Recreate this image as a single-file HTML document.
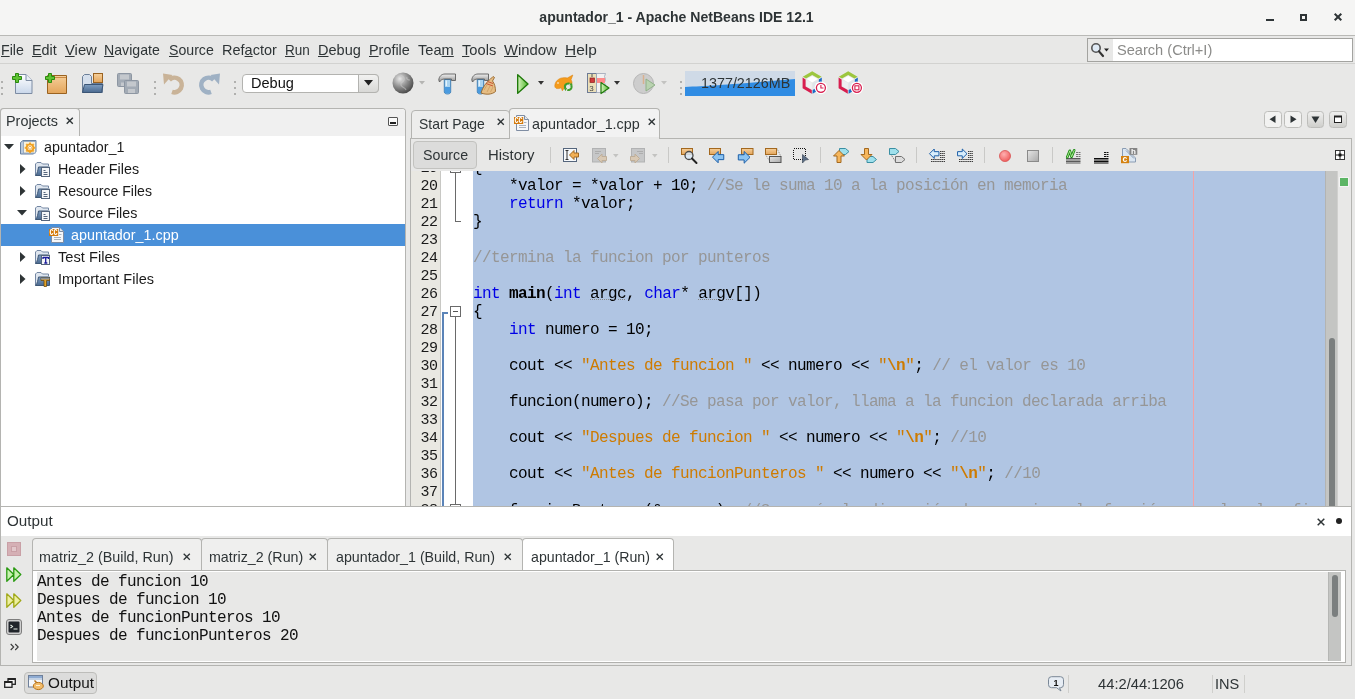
<!DOCTYPE html>
<html><head><meta charset="utf-8"><title>apuntador_1 - Apache NetBeans IDE 12.1</title>
<style>
*{box-sizing:border-box;margin:0;padding:0}
html,body{width:1355px;height:699px;overflow:hidden;background:#e8e8e7;font-family:"Liberation Sans",sans-serif;font-size:14.1px;color:#2e3436}
#w{position:absolute;left:0;top:0;width:1355px;height:699px;overflow:hidden;will-change:transform}
.a{position:absolute}
.t{position:absolute;white-space:pre;line-height:16px;height:16px;transform-origin:0 0}
svg{position:absolute;overflow:visible}
.mono{font-family:"Liberation Mono",monospace}
u{text-decoration:underline;text-decoration-thickness:1px;text-underline-offset:1px}
#code{position:absolute;left:411px;top:171px;width:940px;height:335px;overflow:hidden;background:#fff}
.ln{position:absolute;left:0;width:26.400px;text-align:right;font:15px/18px "Liberation Mono",monospace;letter-spacing:-0.57px;color:#1a1a1a;height:18px}
.cl{position:absolute;left:62px;white-space:pre;font:16px/18px "Liberation Mono",monospace;letter-spacing:-0.6px;color:#000;height:18px}
.k{color:#0000e6}.s{color:#ce7b00}.c{color:#969696}.b{font-weight:bold}
.w{text-decoration:underline dotted #8a8a8a 1px;text-underline-offset:1px}
.out{position:absolute;left:37px;white-space:pre;font:16px/18px "Liberation Mono",monospace;letter-spacing:-0.6px;color:#111;height:18px}
.sep{position:absolute;width:1px;background:#c9c9c7}
.grip{position:absolute;width:2px;height:2px;background:#b0b0ae}
</style></head><body>
<div id="w">
<div class="a" style="left:0;top:0;width:1355px;height:36px;background:#f5f5f4;border-bottom:1px solid #b9b9b6"></div>
<div class="t" style="left:-1.5px;width:1355px;text-align:center;top:9px;font-weight:bold;font-size:14.56px;color:#2e3436;transform:scaleX(.966);transform-origin:50% 0">apuntador_1 - Apache NetBeans IDE 12.1</div>
<div class="a" style="left:1266px;top:19px;width:8px;height:2px;background:#2e3436"></div>
<div class="a" style="left:1300px;top:14px;width:7px;height:7px;border:2px solid #2e3436"></div>
<svg style="left:1334px;top:13px" width="8" height="8" viewBox="0 0 8 8"><path d="M0.7 0.7L7.3 7.3M7.3 0.7L0.7 7.3" stroke="#2e3436" stroke-width="2" fill="none"/></svg>
<div class="a" style="left:0;top:36px;width:1355px;height:28px;background:#e8e8e7;border-bottom:1px solid #d2d2d0"></div>
<div class="t" style="left:1.3px;top:42px;font-size:14.6px;transform:scaleX(0.9691);"><u>F</u>ile</div>
<div class="t" style="left:32.3px;top:42px;font-size:14.6px;transform:scaleX(0.9857);"><u>E</u>dit</div>
<div class="t" style="left:65.3px;top:42px;font-size:14.6px;transform:scaleX(1.0133);"><u>V</u>iew</div>
<div class="t" style="left:104.3px;top:42px;font-size:14.6px;transform:scaleX(0.9683);"><u>N</u>avigate</div>
<div class="t" style="left:169.3px;top:42px;font-size:14.6px;transform:scaleX(0.9684);"><u>S</u>ource</div>
<div class="t" style="left:222.3px;top:42px;font-size:14.6px;transform:scaleX(0.9931);">Ref<u>a</u>ctor</div>
<div class="t" style="left:285.3px;top:42px;font-size:14.6px;transform:scaleX(0.9259);"><u>R</u>un</div>
<div class="t" style="left:318.3px;top:42px;font-size:14.6px;transform:scaleX(0.9948);"><u>D</u>ebug</div>
<div class="t" style="left:369.3px;top:42px;font-size:14.6px;transform:scaleX(0.9859);"><u>P</u>rofile</div>
<div class="t" style="left:418.3px;top:42px;font-size:14.6px;transform:scaleX(1.0027);">Tea<u>m</u></div>
<div class="t" style="left:461.8px;top:42px;font-size:14.6px;transform:scaleX(1.0063);"><u>T</u>ools</div>
<div class="t" style="left:504.3px;top:42px;font-size:14.6px;transform:scaleX(1.0168);"><u>W</u>indow</div>
<div class="t" style="left:565.3px;top:42px;font-size:14.6px;transform:scaleX(1.0590);"><u>H</u>elp</div>
<div class="a" style="left:1087px;top:38px;width:266px;height:24px;border:1px solid #a3a3a0;background:#fff"></div>
<div class="a" style="left:1088px;top:39px;width:25px;height:22px;background:#e8e8e7"></div>
<svg style="left:1090px;top:42px" width="22" height="16" viewBox="0 0 22 16"><circle cx="6" cy="6" r="4.2" fill="#dfeaf5" stroke="#555" stroke-width="1.6"/><path d="M9 9.4L13 14" stroke="#333" stroke-width="2.2" stroke-linecap="round"/><path d="M14 6.5h5l-2.5 3z" fill="#222"/></svg>
<div class="t" style="left:1116.7px;top:42px;font-size:14.6px;transform:scaleX(0.9997);color:#8b8b89;">Search (Ctrl+I)</div>
<div class="grip" style="left:1px;top:81px"></div>
<div class="grip" style="left:1px;top:87px"></div>
<div class="grip" style="left:1px;top:93px"></div>
<div class="grip" style="left:154px;top:81px"></div>
<div class="grip" style="left:154px;top:87px"></div>
<div class="grip" style="left:154px;top:93px"></div>
<div class="grip" style="left:234px;top:81px"></div>
<div class="grip" style="left:234px;top:87px"></div>
<div class="grip" style="left:234px;top:93px"></div>
<div class="grip" style="left:680px;top:81px"></div>
<div class="grip" style="left:680px;top:87px"></div>
<div class="grip" style="left:680px;top:93px"></div>
<svg width="0" height="0" style="left:0;top:0"><defs>
<linearGradient id="gPage" x1="0" y1="0" x2="0" y2="1"><stop offset="0" stop-color="#ffffff"/><stop offset="1" stop-color="#c9d7ea"/></linearGradient>
<linearGradient id="gOr" x1="0" y1="0" x2="0" y2="1"><stop offset="0" stop-color="#f6cf9a"/><stop offset="1" stop-color="#e3a55b"/></linearGradient>
<linearGradient id="gFold" x1="0" y1="0" x2="0" y2="1"><stop offset="0" stop-color="#7f9dc0"/><stop offset="1" stop-color="#4a6a90"/></linearGradient>
<linearGradient id="gGr" x1="0" y1="0" x2="1" y2="0"><stop offset="0" stop-color="#d8f5c0"/><stop offset="1" stop-color="#4fb52a"/></linearGradient>
<radialGradient id="gGlobe" cx="0.35" cy="0.3" r="0.8"><stop offset="0" stop-color="#e8e8e8"/><stop offset="0.5" stop-color="#8c8c8c"/><stop offset="1" stop-color="#3c3c3c"/></radialGradient>
<linearGradient id="gHam" x1="0" y1="0" x2="0" y2="1"><stop offset="0" stop-color="#b9def5"/><stop offset=".55" stop-color="#6db4e6"/><stop offset="1" stop-color="#2f86cf"/></linearGradient>
<linearGradient id="gHead" x1="0" y1="0" x2="0" y2="1"><stop offset="0" stop-color="#f0f0f0"/><stop offset="1" stop-color="#8e8e8e"/></linearGradient>
<linearGradient id="gBtn" x1="0" y1="0" x2="0" y2="1"><stop offset="0" stop-color="#f4f4f3"/><stop offset="1" stop-color="#d9d9d7"/></linearGradient>
<linearGradient id="gBtn2" x1="0" y1="0" x2="0" y2="1"><stop offset="0" stop-color="#f0f0ef"/><stop offset="1" stop-color="#cfcfcd"/></linearGradient>
<linearGradient id="gSq" x1="0" y1="0" x2="1" y2="1"><stop offset="0" stop-color="#e6e6e6"/><stop offset="1" stop-color="#a9a9a9"/></linearGradient>
<radialGradient id="gRed" cx="0.4" cy="0.35" r="0.7"><stop offset="0" stop-color="#ffb0b0"/><stop offset="1" stop-color="#ee5a5a"/></radialGradient>
</defs></svg>
<svg style="left:12px;top:73px" width="22" height="22" viewBox="0 0 22 22"><path d="M3.5 1.5h10.5l6 6v13h-16.5z" fill="url(#gPage)" stroke="#7d8ca3" stroke-width="1"/><path d="M14 1.5v6h6" fill="#e9eef6" stroke="#7d8ca3" stroke-width="1"/><path d="M0.5 3.5h3v-3h3v3h3v3h-3v3h-3v-3h-3z" fill="#5ec232" stroke="#2b8a0e" stroke-width="1"/></svg>
<svg style="left:45px;top:73px" width="22" height="22" viewBox="0 0 22 22"><path d="M2.5 2.5h19v18h-19z" fill="url(#gOr)" stroke="#9a6220" stroke-width="1"/><path d="M3 4.5h18" stroke="#c98a45" stroke-width="1"/><path d="M0.5 3.5h3v-3h3v3h3v3h-3v3h-3v-3h-3z" fill="#5ec232" stroke="#2b8a0e" stroke-width="1"/></svg>
<svg style="left:81px;top:72px" width="23" height="23" viewBox="0 0 23 23"><rect x="12.500" y="1.500" width="9" height="9" fill="url(#gOr)" stroke="#9a6220"/><path d="M1.500 20.500v-16l2-2h5l2 2v7h11v9z" fill="#d5dfec" stroke="#6b7f99"/><path d="M1.500 20.500l2-8h18.500l-1.500 8z" fill="url(#gFold)" stroke="#3b5575"/></svg>
<svg style="left:117px;top:72px" width="23" height="23" viewBox="0 0 23 23"><g fill="#a3abb5" stroke="#8d96a2"><rect x="0.500" y="1.500" width="14" height="13" rx="1"/><rect x="7.500" y="8.500" width="14" height="13" rx="1"/></g><g fill="#c4c8cd"><rect x="3" y="2.500" width="9" height="5"/><rect x="10" y="9.500" width="9" height="5"/><rect x="11" y="17" width="7" height="4"/><rect x="4" y="10.500" width="3" height="3.500"/></g></svg>
<svg style="left:163px;top:73px" width="22" height="22" viewBox="0 0 22 22"><path d="M6.300 6.800A7.300 7.300 0 1 1 9 18.900" fill="none" stroke="#c9b398" stroke-width="4.600"/><path d="M0 .5l9.500 1.500-8.500 9.500z" fill="#c9b398"/></svg>
<svg style="left:198px;top:73px" width="22" height="22" viewBox="0 0 22 22"><g transform="translate(22 0) scale(-1 1)"><path d="M6.300 6.800A7.300 7.300 0 1 1 9 18.900" fill="none" stroke="#9fb1c4" stroke-width="4.600"/><path d="M0 .5l9.500 1.500-8.500 9.500z" fill="#9fb1c4"/></g></svg>
<div class="a" style="left:242px;top:74px;width:137px;height:19px;border:1px solid #b3b3b0;border-radius:4px;background:#fff"></div>
<div class="a" style="left:358px;top:74px;width:21px;height:19px;border:1px solid #b3b3b0;border-radius:0 4px 4px 0;background:linear-gradient(#f2f2f1,#d8d8d6)"></div>
<svg style="left:364px;top:80px" width="9" height="6" viewBox="0 0 9 6"><path d="M0 0h9l-4.500 5.500z" fill="#222"/></svg>
<div class="t" style="left:251.3px;top:75px;font-size:14.6px;transform:scaleX(0.9971);color:#111;">Debug</div>
<svg style="left:392px;top:72px" width="22" height="22" viewBox="0 0 22 22"><circle cx="11" cy="11" r="10.500" fill="url(#gGlobe)"/><path d="M8 3c3 1 5 2 4 5s-4 2-3 5 4 2 5 5M15 5c-1 2 1 3 3 3" stroke="#d0d0d0" stroke-width="1.200" fill="none" opacity=".5"/></svg>
<svg style="left:419px;top:81px" width="6" height="4" viewBox="0 0 6 4"><path d="M0 0h6l-3 3.500z" fill="#b5b5b3"/></svg>
<svg style="left:438px;top:73px" width="20" height="22" viewBox="0 0 20 22"><path d="M6.300 6.500h6.400v12.500c0 2.600-6.400 2.600-6.400 0z" fill="#a9d3f0" stroke="#2f73ad" stroke-width=".9"/><path d="M6.700 14h5.600v5c0 2-5.600 2-5.600 0z" fill="#4a9be0"/><path d="M8.300 7.500v5.500" stroke="#eaf6fd" stroke-width="1.200"/><path d="M.8 7c.2-3.500 2.700-6 6.200-6h10.500v6.500h-4v-1.500h-7c-2.500 0-4 1.500-5 3z" fill="url(#gHead)" stroke="#5f5f5f" stroke-width=".9" stroke-linejoin="round"/></svg>
<svg style="left:471px;top:73px" width="26" height="22" viewBox="0 0 26 22"><path d="M6.300 6.500h6.400v12.500c0 2.600-6.400 2.600-6.400 0z" fill="#a9d3f0" stroke="#2f73ad" stroke-width=".9"/><path d="M6.700 14h5.600v5c0 2-5.600 2-5.600 0z" fill="#4a9be0"/><path d="M8.300 7.500v5.500" stroke="#eaf6fd" stroke-width="1.200"/><path d="M.8 7c.2-3.500 2.700-6 6.200-6h10.500v6.500h-4v-1.500h-7c-2.500 0-4 1.500-5 3z" fill="url(#gHead)" stroke="#5f5f5f" stroke-width=".9" stroke-linejoin="round"/><path d="M19.500 6l2.500-2.500 1.500 1-2 3.500c2 2.500 3 6 3 10.500-3.500 3-9 3.500-14.500 1.500 1.500-5.500 5-10.500 9.500-14z" fill="#e6bd84" stroke="#96652a" stroke-width=".9" stroke-linejoin="round"/><path d="M16.500 8.500l5.500 2M15 10.500l7 2.500" stroke="#c64a2c" stroke-width=".9"/><path d="M13 17l3-5M16 19l3-6M19.500 19l2.500-5" stroke="#c99a5a" stroke-width=".7"/></svg>
<svg style="left:517px;top:74px" width="12" height="20" viewBox="0 0 12 20"><path d="M.7 .7l10.300 9.300-10.300 9.300z" fill="url(#gGr)" stroke="#1f7a0a" stroke-width="1.400" stroke-linejoin="round"/></svg>
<svg style="left:538px;top:81px" width="6" height="4" viewBox="0 0 6 4"><path d="M0 0h6l-3 3.800z" fill="#333"/></svg>
<svg style="left:554px;top:75px" width="20" height="17" viewBox="0 0 20 17"><path d="M.8 10.500c.5-5.500 6-9 12.500-7.500l5.500-3-1.800 4.800c1 1.500 1.200 3 .8 4.500-3-2-6-1-7 3l-2.500 3.500-1-3c-3.500 1.500-6.700 1-6.500-2.300z" fill="#f49b1d" stroke="#de8410" stroke-width=".6"/><circle cx="4" cy="8" r=".8" fill="#fff"/><circle cx="14.300" cy="11.800" r="3.300" fill="none" stroke="#3f9e2c" stroke-width="2" stroke-dasharray="7.700 2.670" transform="rotate(-30 14.300 11.800)"/><path d="M17 7.500l1.800 2.800-3.300.2zM11.600 16.100l-1.800-2.800 3.300-.2z" fill="#3f9e2c"/></svg>
<svg style="left:587px;top:73px" width="23" height="22" viewBox="0 0 23 22"><rect x=".5" y=".5" width="9" height="19" fill="#eadfb8" stroke="#6d7a94"/><rect x="3" y="5" width="4.500" height="4.500" fill="#cf3a3a" stroke="#8a1f1f" stroke-width=".7"/><path d="M5 1v3" stroke="#555"/><text x="2.300" y="18" font-size="8" font-family="Liberation Sans" fill="#444">3</text><path d="M9.500 .5h9l-1 3 1 3-1 3 1 3-1 3 1 4h-9z" fill="#f1f1f1" stroke="#9aa3b5" stroke-width=".8"/><rect x="10" y="5" width="8" height="5" fill="#ff8a8a"/><path d="M14 9.500l8 5.500-8 5.500z" fill="url(#gGr)" stroke="#1f7a0a" stroke-width="1.200" stroke-linejoin="round"/></svg>
<svg style="left:614px;top:81px" width="6" height="4" viewBox="0 0 6 4"><path d="M0 0h6l-3 3.800z" fill="#333"/></svg>
<svg style="left:633px;top:72px" width="23" height="23" viewBox="0 0 23 23"><circle cx="10.500" cy="11.500" r="10" fill="#cdcdcd" stroke="#b4b4b4"/><path d="M10.500 3v9" stroke="#d9b08f" stroke-width="1.500"/><path d="M13 7l9 6-9 6z" fill="#b9d3b0" stroke="#90b088" stroke-width="1" stroke-linejoin="round"/></svg>
<svg style="left:661px;top:81px" width="6" height="4" viewBox="0 0 6 4"><path d="M0 0h6l-3 3.500z" fill="#c3c3c1"/></svg>
<div class="a" style="left:685px;top:71px;width:110px;height:25px;background:#cfdae7;overflow:hidden"><svg style="left:0;top:0" width="110" height="25" viewBox="0 0 110 25"><path d="M0 16c25-1 55-3 110-8v17h-110z" fill="#308ce3"/></svg></div>
<div class="t" style="left:701.3px;top:75px;font-size:14.6px;transform:scaleX(0.9822);color:#2e3436;">1377/2126MB</div>
<svg style="left:802px;top:71px" width="26" height="24" viewBox="0 0 26 24"><path d="M.8 5.700L10.200 .3l9.400 5.400-3.200 1.900-6.200-3.600-6.200 3.600z" fill="#9cc63e"/><path d="M.6 6.600l3 1.800v7.100l6.200 3.600v3.600l-9.200-5.400z" fill="#d81e4f"/><path d="M19.800 6.600l-3 1.800v7.100l-6.200 3.600v3.600l9.200-5.400z" fill="#1b6ac6"/><path d="M10.200 4.900l5.600 3.200-5.600 3.300-5.600-3.300z" fill="#ffffff"/><path d="M4.400 8.900l5.400 3.200v6.200l-5.400-3.200z" fill="#eef0f2"/><path d="M16 8.900l-5.400 3.200v6.200l5.400-3.200z" fill="#dfe5ea"/><circle cx="18.900" cy="16.800" r="6.400" fill="#fff"/><circle cx="18.900" cy="16.800" r="4.500" fill="#fff" stroke="#d81e4f" stroke-width="1.300"/><path d="M18.900 13.900v3.100h2.600" stroke="#d81e4f" stroke-width="1.100" fill="none"/></svg>
<svg style="left:838px;top:71px" width="26" height="24" viewBox="0 0 26 24"><path d="M.8 5.700L10.200 .3l9.400 5.400-3.200 1.900-6.200-3.600-6.200 3.600z" fill="#9cc63e"/><path d="M.6 6.600l3 1.800v7.100l6.200 3.600v3.600l-9.200-5.400z" fill="#d81e4f"/><path d="M19.800 6.600l-3 1.800v7.100l-6.200 3.600v3.600l9.200-5.400z" fill="#1b6ac6"/><path d="M10.200 4.900l5.600 3.200-5.600 3.300-5.600-3.300z" fill="#ffffff"/><path d="M4.400 8.900l5.400 3.200v6.200l-5.400-3.200z" fill="#eef0f2"/><path d="M16 8.900l-5.400 3.200v6.200l5.400-3.200z" fill="#dfe5ea"/><circle cx="18.900" cy="16.800" r="6.400" fill="#fff"/><circle cx="18.900" cy="16.800" r="4.500" fill="#fff" stroke="#d81e4f" stroke-width="1.300"/><rect x="16.900" y="14.800" width="4" height="4" fill="#fff" stroke="#d81e4f" stroke-width="1.100"/></svg>
<div class="a" style="left:0;top:108px;width:406px;height:398px;border:1px solid #b4b4b1;border-bottom:none;border-radius:4px 4px 0 0;background:#fff"></div>
<div class="a" style="left:1px;top:109px;width:404px;height:27px;background:#f0f0f0;border-radius:3px 3px 0 0"></div>
<div class="a" style="left:0;top:108px;width:80px;height:28px;border:1px solid #b4b4b1;border-bottom:none;border-radius:4px 4px 0 0;background:#f2f2f2"></div>
<div class="t" style="left:5.8px;top:113px;font-size:14.6px;transform:scaleX(0.9859);">Projects</div>
<svg style="left:66px;top:117.3px" width="7.5" height="7.5" viewBox="0 0 7.5 7.5"><path d="M.7 .7l6.1 6.1M6.8 .7l-6.1 6.1" stroke="#2e3436" stroke-width="1.4" fill="none"/></svg>
<div class="a" style="left:388px;top:117px;width:10px;height:9px;border:1px solid #555;border-radius:1px;background:#fafafa"></div>
<div class="a" style="left:390px;top:122px;width:6px;height:2px;background:#222"></div>
<div class="a" style="left:1px;top:224px;width:404px;height:22px;background:#4a90d9"></div>
<svg style="left:4px;top:144px" width="10" height="6" viewBox="0 0 10 6"><path d="M0 0h10l-5 5.500z" fill="#2e3436"/></svg>
<svg style="left:20px;top:140px" width="17" height="15" viewBox="0 0 17 15"><path d="M.5 2.500l2.500-2h13v11l-2.500 2.500h-13z" fill="#b9c9dc" stroke="#6a82a0"/><rect x="3.500" y="1.500" width="12" height="11.500" fill="#fbf3dc" stroke="#8ea3bf" stroke-width=".8"/><rect x="-1" y="-5.300" width="2" height="2.200" fill="#f2ad3c" transform="translate(10 7.800) rotate(0)"/><rect x="-1" y="-5.300" width="2" height="2.200" fill="#f2ad3c" transform="translate(10 7.800) rotate(45)"/><rect x="-1" y="-5.300" width="2" height="2.200" fill="#f2ad3c" transform="translate(10 7.800) rotate(90)"/><rect x="-1" y="-5.300" width="2" height="2.200" fill="#f2ad3c" transform="translate(10 7.800) rotate(135)"/><rect x="-1" y="-5.300" width="2" height="2.200" fill="#f2ad3c" transform="translate(10 7.800) rotate(180)"/><rect x="-1" y="-5.300" width="2" height="2.200" fill="#f2ad3c" transform="translate(10 7.800) rotate(225)"/><rect x="-1" y="-5.300" width="2" height="2.200" fill="#f2ad3c" transform="translate(10 7.800) rotate(270)"/><rect x="-1" y="-5.300" width="2" height="2.200" fill="#f2ad3c" transform="translate(10 7.800) rotate(315)"/><circle cx="10" cy="7.800" r="3.400" fill="none" stroke="#f0a020" stroke-width="1.900"/><circle cx="10" cy="7.800" r="1.500" fill="#fff" stroke="#e08a10" stroke-width=".6"/></svg>
<div class="t" style="left:43.6px;top:139px;font-size:14.6px;transform:scaleX(0.9829);color:#1b1b1b;">apuntador_1</div>
<svg style="left:20px;top:164px" width="6" height="10" viewBox="0 0 6 10"><path d="M0 0v10l5.500-5z" fill="#2e3436"/></svg>
<svg style="left:34px;top:161px" width="17" height="17" viewBox="0 0 17 17"><path d="M1.500 14.500v-11.500l1.500-1.500h4l1.500 1.500h6v2" fill="#dfe6ef" stroke="#7487a3" stroke-width="1"/><path d="M1.500 14.500c2-2 2.500-6 3-8.500h11v8.500z" fill="url(#gFold)" stroke="#3f5876" stroke-width="1"/><rect x="7.500" y="6.500" width="8" height="9" fill="#f4f6f8" stroke="#55657c" stroke-width="1"/><path d="M9.500 9.500h2M9.500 11.500h4M9.500 13.500h4" stroke="#55657c" stroke-width="1"/></svg>
<div class="t" style="left:57.7px;top:161px;font-size:14.6px;transform:scaleX(0.9798);color:#1b1b1b;">Header Files</div>
<svg style="left:20px;top:186px" width="6" height="10" viewBox="0 0 6 10"><path d="M0 0v10l5.500-5z" fill="#2e3436"/></svg>
<svg style="left:34px;top:183px" width="17" height="17" viewBox="0 0 17 17"><path d="M1.500 14.500v-11.500l1.500-1.500h4l1.500 1.500h6v2" fill="#dfe6ef" stroke="#7487a3" stroke-width="1"/><path d="M1.500 14.500c2-2 2.500-6 3-8.500h11v8.500z" fill="url(#gFold)" stroke="#3f5876" stroke-width="1"/><rect x="7.500" y="6.500" width="8" height="9" fill="#f4f6f8" stroke="#55657c" stroke-width="1"/><path d="M9.500 9.500h2M9.500 11.500h4M9.500 13.500h4" stroke="#55657c" stroke-width="1"/></svg>
<div class="t" style="left:57.7px;top:183px;font-size:14.6px;transform:scaleX(0.9654);color:#1b1b1b;">Resource Files</div>
<svg style="left:17px;top:210px" width="10" height="6" viewBox="0 0 10 6"><path d="M0 0h10l-5 5.500z" fill="#2e3436"/></svg>
<svg style="left:34px;top:205px" width="17" height="17" viewBox="0 0 17 17"><path d="M1.500 14.500v-11.500l1.500-1.500h4l1.500 1.500h6v2" fill="#dfe6ef" stroke="#7487a3" stroke-width="1"/><path d="M1.500 14.500c2-2 2.500-6 3-8.500h11v8.500z" fill="url(#gFold)" stroke="#3f5876" stroke-width="1"/><rect x="7.500" y="6.500" width="8" height="9" fill="#f4f6f8" stroke="#55657c" stroke-width="1"/><path d="M9.500 9.500h2M9.500 11.500h4M9.500 13.500h4" stroke="#55657c" stroke-width="1"/></svg>
<div class="t" style="left:57.7px;top:205px;font-size:14.6px;transform:scaleX(0.9785);color:#1b1b1b;">Source Files</div>
<svg style="left:20px;top:252px" width="6" height="10" viewBox="0 0 6 10"><path d="M0 0v10l5.500-5z" fill="#2e3436"/></svg>
<svg style="left:34px;top:249px" width="17" height="17" viewBox="0 0 17 17"><path d="M1.500 14.500v-11.500l1.500-1.500h4l1.500 1.500h6v2" fill="#dfe6ef" stroke="#7487a3" stroke-width="1"/><path d="M1.500 14.500c2-2 2.500-6 3-8.500h11v8.500z" fill="url(#gFold)" stroke="#3f5876" stroke-width="1"/><rect x="7.500" y="6.500" width="8" height="9" fill="#f4f6f8" stroke="#55657c"/><path d="M9 8.500h5.500M9 8v2M14.500 8v2M11.700 8.500v5.500M10.300 14h3" stroke="#1c1c9c" stroke-width="1.300" fill="none"/></svg>
<div class="t" style="left:57.7px;top:249px;font-size:14.6px;transform:scaleX(1.0039);color:#1b1b1b;">Test Files</div>
<svg style="left:20px;top:274px" width="6" height="10" viewBox="0 0 6 10"><path d="M0 0v10l5.500-5z" fill="#2e3436"/></svg>
<svg style="left:34px;top:271px" width="17" height="17" viewBox="0 0 17 17"><path d="M1.500 14.500v-11.500l1.500-1.500h4l1.500 1.500h6v2" fill="#dfe6ef" stroke="#7487a3" stroke-width="1"/><path d="M1.500 14.500c2-2 2.500-6 3-8.500h11v8.500z" fill="url(#gFold)" stroke="#3f5876" stroke-width="1"/><path d="M7 7h8.500v2.500h-3v6h-2.500v-6h-3z" fill="#e2a32b" stroke="#6d4b12" stroke-width=".8"/><path d="M7 7h8.500v1.500h-8.500z" fill="#8a8f96"/></svg>
<div class="t" style="left:57.7px;top:271px;font-size:14.6px;transform:scaleX(0.9942);color:#1b1b1b;">Important Files</div>
<svg style="left:49px;top:227px" width="16" height="17" viewBox="0 0 16 17"><path d="M2.500 .5h8l4 4v11h-12z" fill="#f6f7f9" stroke="#7f8da3" stroke-width="1"/><path d="M10.500 .5v4h4" fill="#e3e7ec" stroke="#7f8da3" stroke-width="1"/><path d="M5 10.500h7M5 12.500h7" stroke="#aab2bd" stroke-width="1"/><path d="M10 7.500h2.500" stroke="#aab2bd" stroke-width="1"/><rect x="0" y="2" width="9.200" height="7" fill="#d47a0c"/><text x=".6" y="8.300" font-size="10.500" font-weight="bold" font-family="Liberation Sans" fill="#fff" textLength="8" lengthAdjust="spacingAndGlyphs">cc</text></svg>
<div class="t" style="left:71.3px;top:227px;font-size:14.6px;transform:scaleX(0.9827);color:#fff;">apuntador_1.cpp</div>
<div class="a" style="left:410px;top:138px;width:942px;height:368px;border:1px solid #b4b4b1;border-bottom:none;background:#e8e8e7"></div>
<div class="a" style="left:411px;top:110px;width:99px;height:29px;border:1px solid #b4b4b1;border-radius:4px 4px 0 0;background:#ededec"></div>
<div class="a" style="left:509px;top:108px;width:151px;height:31px;border:1px solid #b4b4b1;border-bottom:none;border-radius:4px 4px 0 0;background:#f2f2f2"></div>
<div class="a" style="left:510px;top:137px;width:149px;height:3px;background:#e8e8e7"></div>
<div class="t" style="left:418.7px;top:116px;font-size:14.6px;transform:scaleX(0.9552);">Start Page</div>
<svg style="left:496.7px;top:117.6px" width="7.5" height="7.5" viewBox="0 0 7.5 7.5"><path d="M.7 .7l6.1 6.1M6.8 .7l-6.1 6.1" stroke="#2e3436" stroke-width="1.35" fill="none"/></svg>
<svg style="left:514px;top:114.5px" width="16" height="17" viewBox="0 0 16 17"><path d="M2.500 .5h8l4 4v11h-12z" fill="#f6f7f9" stroke="#7f8da3" stroke-width="1"/><path d="M10.500 .5v4h4" fill="#e3e7ec" stroke="#7f8da3" stroke-width="1"/><path d="M5 10.500h7M5 12.500h7" stroke="#aab2bd" stroke-width="1"/><path d="M10 7.500h2.500" stroke="#aab2bd" stroke-width="1"/><rect x="0" y="2" width="9.200" height="7" fill="#d47a0c"/><text x=".6" y="8.300" font-size="10.500" font-weight="bold" font-family="Liberation Sans" fill="#fff" textLength="8" lengthAdjust="spacingAndGlyphs">cc</text></svg>
<div class="t" style="left:532.3px;top:116px;font-size:14.6px;transform:scaleX(0.9836);">apuntador_1.cpp</div>
<svg style="left:648px;top:117.6px" width="7.5" height="7.5" viewBox="0 0 7.5 7.5"><path d="M.7 .7l6.1 6.1M6.8 .7l-6.1 6.1" stroke="#2e3436" stroke-width="1.35" fill="none"/></svg>
<div class="a" style="left:1264px;top:111px;width:18px;height:17px;border:1px solid #bdbdba;border-radius:3.500px;background:#f2f2f1"></div>
<svg style="left:1264px;top:111px" width="18" height="17" viewBox="0 0 18 17"><path d="M11.500 4.500v7.500l-6-3.750z" fill="#2e3436"/></svg>
<div class="a" style="left:1284px;top:111px;width:18px;height:17px;border:1px solid #bdbdba;border-radius:3.500px;background:#f2f2f1"></div>
<svg style="left:1284px;top:111px" width="18" height="17" viewBox="0 0 18 17"><path d="M6.500 4.500v7.500l6-3.750z" fill="#2e3436"/></svg>
<div class="a" style="left:1307px;top:111px;width:17px;height:17px;border:1px solid #bdbdba;border-radius:3.500px;background:linear-gradient(#efefee,#cfcfcc)"></div>
<svg style="left:1307px;top:111px" width="17" height="17" viewBox="0 0 17 17"><path d="M4.500 5.500h8l-4 6.500z" fill="#2e3436"/></svg>
<div class="a" style="left:1329px;top:111px;width:18px;height:17px;border:1px solid #bdbdba;border-radius:3.500px;background:linear-gradient(#efefee,#cfcfcc)"></div>
<svg style="left:1329px;top:111px" width="18" height="17" viewBox="0 0 18 17"><rect x="5.500" y="5.500" width="7" height="6" fill="#fff" stroke="#222" stroke-width="1"/><path d="M5 5.500h8" stroke="#222" stroke-width="2"/></svg>
<div class="a" style="left:413px;top:141px;width:64px;height:28px;border:1px solid #c2c2bf;border-radius:4px;background:#dcdcdb"></div>
<div class="t" style="left:422.9px;top:147px;font-size:14.6px;transform:scaleX(0.9749);">Source</div>
<div class="t" style="left:487.8px;top:147px;font-size:14.6px;transform:scaleX(1.0214);">History</div>
<div class="sep" style="left:550px;top:147px;height:16px"></div>
<div class="sep" style="left:668px;top:147px;height:16px"></div>
<div class="sep" style="left:820px;top:147px;height:16px"></div>
<div class="sep" style="left:916px;top:147px;height:16px"></div>
<div class="sep" style="left:984px;top:147px;height:16px"></div>
<div class="sep" style="left:1052px;top:147px;height:16px"></div>
<svg style="left:563px;top:148px" width="17" height="15" viewBox="0 0 17 15"><rect x=".5" y=".5" width="13" height="13" fill="#f7f9fb" stroke="#55657c"/><path d="M2.500 2.500h3M4 2.500v9M2.500 11.500h3" stroke="#333" stroke-width="1"/><path d="M6.5 7.0l4.5 -4.5v2.5h4.5v4.0h-4.5v2.5z" fill="#f2b056" stroke="#a3681f" stroke-width="1" stroke-linejoin="round"/></svg>
<svg style="left:592px;top:148px" width="15" height="15" viewBox="0 0 15 15"><rect x=".5" y=".5" width="13" height="13.500" fill="#c6c7c8" stroke="#b1b2b3"/><path d="M3 3.500h6M3 5.500h4" stroke="#adadad"/><path d="M5.5 10.5l4.5 -4.5v2.5h4.5v4.0h-4.5v2.5z" fill="#d9c9b4" stroke="#bfae98" stroke-width="1" stroke-linejoin="round"/></svg>
<svg style="left:613px;top:154px" width="6" height="4" viewBox="0 0 6 4"><path d="M0 0h5.500l-2.700 3.500z" fill="#c3c3c1"/></svg>
<svg style="left:630px;top:148px" width="16" height="15" viewBox="0 0 16 15"><rect x="1.500" y=".5" width="13" height="13.500" fill="#c6c7c8" stroke="#b1b2b3"/><path d="M7 3.500h6M9 5.500h4" stroke="#adadad"/><path d="M9.5 10.5l-4.5 -4.5v2.5h-4.5v4.0h4.5v2.5z" fill="#d9c9b4" stroke="#bfae98" stroke-width="1" stroke-linejoin="round"/></svg>
<svg style="left:652px;top:154px" width="6" height="4" viewBox="0 0 6 4"><path d="M0 0h5.500l-2.700 3.500z" fill="#c3c3c1"/></svg>
<svg style="left:681px;top:148px" width="17" height="16" viewBox="0 0 17 16"><rect x="0.5" y="0.5" width="11" height="6" fill="url(#gOr)" stroke="#a3681f" stroke-width="1"/><circle cx="8" cy="7.500" r="4" fill="#dbe9f7" fill-opacity=".85" stroke="#4a4a4a" stroke-width="1.300"/><path d="M11 10.500l4.500 4.500" stroke="#222" stroke-width="2" stroke-linecap="round"/></svg>
<svg style="left:709px;top:148px" width="17" height="15" viewBox="0 0 17 15"><rect x="0.5" y="0.5" width="11" height="6" fill="url(#gOr)" stroke="#a3681f" stroke-width="1"/><path d="M3.5 9.125l5.625 -5.625v3.125h5.625v5.0h-5.625v3.125z" fill="#8cc4f2" stroke="#1d5fa8" stroke-width="1" stroke-linejoin="round"/></svg>
<svg style="left:736px;top:148px" width="18" height="15" viewBox="0 0 18 15"><rect x="5.5" y="0.5" width="11.5" height="6" fill="url(#gOr)" stroke="#a3681f" stroke-width="1"/><path d="M14 9.350000000000001l-5.8500000000000005 -5.8500000000000005v3.25h-5.8500000000000005v5.2h5.8500000000000005v3.25z" fill="#8cc4f2" stroke="#1d5fa8" stroke-width="1" stroke-linejoin="round"/></svg>
<svg style="left:765px;top:148px" width="17" height="15" viewBox="0 0 17 15"><path d="M.5 6.500l5 8M12 .5l4 8" stroke="#777" stroke-width=".8" stroke-dasharray="1 1"/><rect x="0.5" y="0.5" width="11" height="6" fill="url(#gOr)" stroke="#a3681f" stroke-width="1"/><rect x="4.500" y="8.500" width="11.500" height="6" fill="url(#gSq)" stroke="#555"/></svg>
<svg style="left:792px;top:147px" width="17" height="17" viewBox="0 0 17 17"><rect x="1.500" y="1.500" width="12" height="11" fill="none" stroke="#111" stroke-width="1" stroke-dasharray="1 1" shape-rendering="crispEdges"/><path d="M10.500 7.500l6 5-3.200.6-2.800 2.900z" fill="#5d6f86" stroke="#2d3a4c" stroke-width=".6"/></svg>
<svg style="left:833px;top:148px" width="17" height="16" viewBox="0 0 17 16"><path d="M6.5 0.5h6l3.500 3-3.500 3h-6z" fill="#9fe0ec" stroke="#3a8fa3" stroke-width="1" stroke-linejoin="round"/><path d="M6 2.500l5.500 5.500h-3.500v6.500h-4v-6.500h-3.500z" fill="#f6b65c" stroke="#a3681f" stroke-linejoin="round"/></svg>
<svg style="left:861px;top:148px" width="17" height="16" viewBox="0 0 17 16"><path d="M6 8.5h6l3.500 3-3.500 3h-6z" fill="#9fe0ec" stroke="#3a8fa3" stroke-width="1" stroke-linejoin="round"/><path d="M5.500 12l5.500-5.500h-3.500v-6h-4v6h-3.500z" fill="#f6b65c" stroke="#a3681f" stroke-linejoin="round"/></svg>
<svg style="left:888px;top:148px" width="18" height="16" viewBox="0 0 18 16"><path d="M3 6.500l5 8" stroke="#555" stroke-width=".9" stroke-dasharray="1 1"/><path d="M1.5 0.5h6l3.500 3-3.500 3h-6z" fill="#9fe0ec" stroke="#3a8fa3" stroke-width="1" stroke-linejoin="round"/><path d="M7.5 8.5h6l3.500 3-3.500 3h-6z" fill="#dcdcdc" stroke="#707070" stroke-width="1" stroke-linejoin="round"/></svg>
<svg style="left:929px;top:148px" width="17" height="15" viewBox="0 0 17 15"><path d="M11 3.5h5" stroke="#3a3a3a" stroke-width="1" stroke-dasharray="1.500 .6"/><path d="M11 5.5h5" stroke="#3a3a3a" stroke-width="1" stroke-dasharray="1.500 .6"/><path d="M11 7.5h5" stroke="#3a3a3a" stroke-width="1" stroke-dasharray="1.500 .6"/><path d="M11 9.5h5" stroke="#3a3a3a" stroke-width="1" stroke-dasharray="1.500 .6"/><path d="M2 11.5h14" stroke="#3a3a3a" stroke-width="1" stroke-dasharray="1.500 .6"/><path d="M2 13.5h14" stroke="#3a3a3a" stroke-width="1" stroke-dasharray="1.500 .6"/><path d="M0.5 5.7250000000000005l4.7250000000000005 -4.7250000000000005v2.625h4.7250000000000005v4.2h-4.7250000000000005v2.625z" fill="#d9eefc" stroke="#1d5fa8" stroke-width="1" stroke-linejoin="round"/></svg>
<svg style="left:957px;top:148px" width="17" height="15" viewBox="0 0 17 15"><path d="M11 3.5h5" stroke="#3a3a3a" stroke-width="1" stroke-dasharray="1.500 .6"/><path d="M11 5.5h5" stroke="#3a3a3a" stroke-width="1" stroke-dasharray="1.500 .6"/><path d="M11 7.5h5" stroke="#3a3a3a" stroke-width="1" stroke-dasharray="1.500 .6"/><path d="M11 9.5h5" stroke="#3a3a3a" stroke-width="1" stroke-dasharray="1.500 .6"/><path d="M2 11.5h14" stroke="#3a3a3a" stroke-width="1" stroke-dasharray="1.500 .6"/><path d="M2 13.5h14" stroke="#3a3a3a" stroke-width="1" stroke-dasharray="1.500 .6"/><path d="M10 5.7250000000000005l-4.7250000000000005 -4.7250000000000005v2.625h-4.7250000000000005v4.2h4.7250000000000005v2.625z" fill="#d9eefc" stroke="#1d5fa8" stroke-width="1" stroke-linejoin="round"/></svg>
<svg style="left:999px;top:150px" width="12" height="12" viewBox="0 0 12 12"><circle cx="6" cy="6" r="5.500" fill="url(#gRed)" stroke="#d85050" stroke-width=".8"/></svg>
<svg style="left:1027px;top:150px" width="12" height="12" viewBox="0 0 12 12"><rect x=".5" y=".5" width="11" height="11" fill="url(#gSq)" stroke="#8a8a8a"/></svg>
<svg style="left:1066px;top:148px" width="15" height="16" viewBox="0 0 15 16"><path d="M10 4.5h4.500" stroke="#777" stroke-width="1.100" stroke-dasharray="2 .5"/><path d="M10 6.5h4.500" stroke="#777" stroke-width="1.100" stroke-dasharray="2 .5"/><path d="M10 8.5h4.500" stroke="#777" stroke-width="1.100" stroke-dasharray="2 .5"/><path d="M0 10.5h14.500" stroke="#5a5a5a" stroke-width="1"/><path d="M0 12h14.500" stroke="#5a5a5a" stroke-width="1"/><path d="M0 13.5h14.500" stroke="#5a5a5a" stroke-width="1"/><path d="M0 15h14.500" stroke="#5a5a5a" stroke-width="1"/><path d="M1.200 9.300l2.600-6.500 1.800 6 2.600-6.500" fill="none" stroke="#1a8a10" stroke-width="2.600" stroke-linejoin="round" stroke-linecap="round"/><path d="M1.200 9.300l2.600-6.500 1.800 6 2.600-6.500" fill="none" stroke="#b8f0a0" stroke-width=".9" stroke-linejoin="round" stroke-linecap="round"/></svg>
<svg style="left:1094px;top:148px" width="15" height="16" viewBox="0 0 15 16"><path d="M10 4.5h4.500" stroke="#111" stroke-width="1.100" stroke-dasharray="2 .5"/><path d="M10 6.5h4.500" stroke="#111" stroke-width="1.100" stroke-dasharray="2 .5"/><path d="M10 8.5h4.500" stroke="#111" stroke-width="1.100" stroke-dasharray="2 .5"/><path d="M0 10.5h14.500" stroke="#0c0c0c" stroke-width="1"/><path d="M0 12h14.500" stroke="#0c0c0c" stroke-width="1"/><path d="M0 13.5h14.500" stroke="#0c0c0c" stroke-width="1"/><path d="M0 15h14.500" stroke="#0c0c0c" stroke-width="1"/></svg>
<svg style="left:1121px;top:147px" width="17" height="17" viewBox="0 0 17 17"><path d="M1.500 1.500h3.500l9.500 9.500v4h-13z" fill="#dbe6f1" stroke="#8a9cb3"/><path d="M5 3.500l8 8" stroke="#8a9cb3"/><rect x="8.500" y="1" width="7.800" height="6.800" fill="#858585"/><text x="9.900" y="7.200" font-size="8" font-weight="bold" font-family="Liberation Sans" fill="#fff">h</text><rect x="0" y="9" width="8" height="7.200" fill="#d4810f"/><text x="1.500" y="15.300" font-size="8.500" font-weight="bold" font-family="Liberation Sans" fill="#fff">c</text></svg>
<svg style="left:1335px;top:150px" width="10" height="10" viewBox="0 0 10 10"><rect x=".5" y=".5" width="9" height="9" fill="#fff" stroke="#333"/><path d="M5 1v8M1 5h8" stroke="#111" stroke-width="1"/><path d="M3.500 3.500h3v3h-3z" fill="#111"/><path d="M1 1h2.500v2.500h-2.500zM6.500 1h2.500v2.500h-2.500zM1 6.500h2.500v2.500h-2.500zM6.500 6.500h2.500v2.500h-2.500z" fill="#fff"/></svg>
<div id="code">
<div class="a" style="left:0;top:0;width:30px;height:335px;background:#e9e8e2"></div>
<div class="a" style="left:29px;top:0;width:1px;height:335px;background:#c8c8c4"></div>
<div class="a" style="left:62px;top:0;width:852px;height:335px;background:#b0c5e3"></div>
<div class="a" style="left:782px;top:0;width:1px;height:335px;background:#f4a4a6"></div>
<div class="a" style="z-index:2;left:914px;top:0;width:13px;height:335px;background:#c4c5c3;border-left:1px solid #b3b4b2;border-right:1px solid #d0d0ce"></div>
<div class="a" style="z-index:3;left:918px;top:167px;width:6px;height:180px;border-radius:3px;background:#7b7f7f"></div>
<div class="a" style="left:927px;top:0;width:13px;height:335px;background:#e8e8e7"></div>
<div class="a" style="left:929px;top:7px;width:8px;height:8px;background:#5cb565;border:1px solid #f4f4f4;box-sizing:content-box;margin:-1px"></div>
<div class="a" style="left:44px;top:0;width:1px;height:51px;background:#6a6a6a"></div>
<div class="a" style="left:44px;top:50px;width:6px;height:1px;background:#6a6a6a"></div>
<div class="a" style="left:39px;top:-9px;width:11px;height:11px;border:1px solid #6a6a6a;background:#fff"></div>
<div class="a" style="left:31px;top:141px;width:2px;height:200px;background:#5b84b8"></div>
<div class="a" style="left:31px;top:141px;width:6px;height:2px;background:#5b84b8"></div>
<div class="a" style="left:44px;top:146px;width:1px;height:200px;background:#6a6a6a"></div>
<div class="a" style="left:39px;top:135px;width:11px;height:11px;border:1px solid #6a6a6a;background:#fff"></div>
<div class="a" style="left:42px;top:140px;width:5px;height:1px;background:#555"></div>
<div class="a" style="left:39px;top:333px;width:11px;height:11px;border:1px solid #6a6a6a;background:#fff"></div>
<div class="ln" style="top:-11px">19</div><div class="cl" style="top:-12px">{</div>
<div class="ln" style="top:7px">20</div><div class="cl" style="top:6px">    *valor = *valor + 10; <span class="c">//Se le suma 10 a la posición en memoria</span></div>
<div class="ln" style="top:25px">21</div><div class="cl" style="top:24px">    <span class="k">return</span> *valor;</div>
<div class="ln" style="top:43px">22</div><div class="cl" style="top:42px">}</div>
<div class="ln" style="top:61px">23</div><div class="cl" style="top:60px"></div>
<div class="ln" style="top:79px">24</div><div class="cl" style="top:78px"><span class="c">//termina la funcion por punteros</span></div>
<div class="ln" style="top:97px">25</div><div class="cl" style="top:96px"></div>
<div class="ln" style="top:115px">26</div><div class="cl" style="top:114px"><span class="k">int</span> <span class="b">main</span>(<span class="k">int</span> <span class="w">argc</span>, <span class="k">char</span>* <span class="w">argv</span>[])</div>
<div class="ln" style="top:133px">27</div><div class="cl" style="top:132px">{</div>
<div class="ln" style="top:151px">28</div><div class="cl" style="top:150px">    <span class="k">int</span> numero = 10;</div>
<div class="ln" style="top:169px">29</div><div class="cl" style="top:168px"></div>
<div class="ln" style="top:187px">30</div><div class="cl" style="top:186px">    cout &lt;&lt; <span class="s">"Antes de funcion "</span> &lt;&lt; numero &lt;&lt; <span class="s">"</span><span class="s b">\n</span><span class="s">"</span>; <span class="c">// el valor es 10</span></div>
<div class="ln" style="top:205px">31</div><div class="cl" style="top:204px"></div>
<div class="ln" style="top:223px">32</div><div class="cl" style="top:222px">    funcion(numero); <span class="c">//Se pasa por valor, llama a la funcion declarada arriba</span></div>
<div class="ln" style="top:241px">33</div><div class="cl" style="top:240px"></div>
<div class="ln" style="top:259px">34</div><div class="cl" style="top:258px">    cout &lt;&lt; <span class="s">"Despues de funcion "</span> &lt;&lt; numero &lt;&lt; <span class="s">"</span><span class="s b">\n</span><span class="s">"</span>; <span class="c">//10</span></div>
<div class="ln" style="top:277px">35</div><div class="cl" style="top:276px"></div>
<div class="ln" style="top:295px">36</div><div class="cl" style="top:294px">    cout &lt;&lt; <span class="s">"Antes de funcionPunteros "</span> &lt;&lt; numero &lt;&lt; <span class="s">"</span><span class="s b">\n</span><span class="s">"</span>; <span class="c">//10</span></div>
<div class="ln" style="top:313px">37</div><div class="cl" style="top:312px"></div>
<div class="ln" style="top:331px">38</div><div class="cl" style="top:331px;font-size:15px;letter-spacing:0">    funcionPunteros(&amp;numero); <span class="c">//Se envía la dirección de memoria a la función con el valor final</span></div>
</div>
<div class="a" style="left:0;top:506px;width:1352px;height:160px;border:1px solid #b4b4b1;background:#e8e8e7"></div>
<div class="a" style="left:1px;top:507px;width:1350px;height:29px;background:#fff"></div>
<div class="t" style="left:6.9px;top:513px;font-size:14.6px;transform:scaleX(1.0427);">Output</div>
<svg style="left:1317px;top:517.5px" width="8" height="8" viewBox="0 0 8 8"><path d="M.7 .7l6.6 6.6M7.3 .7l-6.6 6.6" stroke="#2e3436" stroke-width="1.5" fill="none"/></svg>
<div class="a" style="left:1336px;top:518px;width:6px;height:6px;border-radius:3px;background:#222"></div>
<svg style="left:7px;top:542px" width="14" height="14" viewBox="0 0 14 14"><rect x=".5" y=".5" width="13" height="13" fill="#d5b0b5" stroke="#c9a0a6"/><rect x="4.500" y="4.500" width="5" height="5" fill="#e2c8cb" stroke="#c9a0a6"/></svg>
<svg style="left:6px;top:567px" width="16" height="15" viewBox="0 0 16 15"><path d="M.8 .8l7 6.700-7 6.700zM7.800 .8l7 6.700-7 6.700z" fill="#c8f2b0" stroke="#2a9a12" stroke-width="1.300" stroke-linejoin="round"/></svg>
<svg style="left:6px;top:593px" width="16" height="15" viewBox="0 0 16 15"><path d="M.8 .8l7 6.700-7 6.700zM7.800 .8l7 6.700-7 6.700z" fill="#eef0a0" stroke="#a0a818" stroke-width="1.300" stroke-linejoin="round"/></svg>
<svg style="left:6px;top:619px" width="16" height="16" viewBox="0 0 16 16"><rect x=".5" y=".5" width="15" height="15" rx="2.500" fill="#cfcfcf" stroke="#7d7d7d"/><rect x="2.500" y="2.500" width="11" height="11" rx="1" fill="#20242a"/><path d="M4.500 6l2 1.500-2 1.500M7.500 10h4" stroke="#e8f0e8" stroke-width="1.100" fill="none"/></svg>
<svg style="left:10px;top:643px" width="10" height="8" viewBox="0 0 10 8"><path d="M.7 1l3 3-3 3M5.200 1l3 3-3 3" stroke="#3a3a3a" stroke-width="1.100" fill="none"/></svg>
<div class="a" style="left:32px;top:570px;width:1314px;height:1px;background:#b4b4b1"></div>
<div class="a" style="left:32px;top:538px;width:170px;height:32px;border:1px solid #b4b4b1;border-bottom:none;border-radius:4px 4px 0 0;background:#efefee"></div>
<div class="t" style="left:39.3px;top:549px;font-size:14.6px;transform:scaleX(0.9816);">matriz_2 (Build, Run)</div>
<svg style="left:182.7px;top:553.3px" width="7.5" height="7.5" viewBox="0 0 7.5 7.5"><path d="M.7 .7l6.1 6.1M6.8 .7l-6.1 6.1" stroke="#2e3436" stroke-width="1.3" fill="none"/></svg>
<div class="a" style="left:201px;top:538px;width:127px;height:32px;border:1px solid #b4b4b1;border-bottom:none;border-radius:4px 4px 0 0;background:#efefee"></div>
<div class="t" style="left:208.8px;top:549px;font-size:14.6px;transform:scaleX(0.9767);">matriz_2 (Run)</div>
<svg style="left:309.2px;top:553.3px" width="7.5" height="7.5" viewBox="0 0 7.5 7.5"><path d="M.7 .7l6.1 6.1M6.8 .7l-6.1 6.1" stroke="#2e3436" stroke-width="1.3" fill="none"/></svg>
<div class="a" style="left:327px;top:538px;width:196px;height:32px;border:1px solid #b4b4b1;border-bottom:none;border-radius:4px 4px 0 0;background:#efefee"></div>
<div class="t" style="left:336.3px;top:549px;font-size:14.6px;transform:scaleX(0.9752);">apuntador_1 (Build, Run)</div>
<svg style="left:504.2px;top:553.3px" width="7.5" height="7.5" viewBox="0 0 7.5 7.5"><path d="M.7 .7l6.1 6.1M6.8 .7l-6.1 6.1" stroke="#2e3436" stroke-width="1.3" fill="none"/></svg>
<div class="a" style="left:522px;top:538px;width:152px;height:33px;border:1px solid #b4b4b1;border-bottom:none;border-radius:4px 4px 0 0;background:#fff"></div>
<div class="t" style="left:531.3px;top:549px;font-size:14.6px;transform:scaleX(0.9709);">apuntador_1 (Run)</div>
<svg style="left:655.7px;top:553.3px" width="7.5" height="7.5" viewBox="0 0 7.5 7.5"><path d="M.7 .7l6.1 6.1M6.8 .7l-6.1 6.1" stroke="#2e3436" stroke-width="1.3" fill="none"/></svg>
<div class="a" style="left:32px;top:570px;width:1314px;height:93px;border:1px solid #b1b1ae;background:#fff"></div>
<div class="a" style="left:37px;top:572px;width:1304px;height:89px;background:#e8e8e7"></div>
<div class="out" style="top:573px">Antes de funcion 10</div>
<div class="out" style="top:591px">Despues de funcion 10</div>
<div class="out" style="top:609px">Antes de funcionPunteros 10</div>
<div class="out" style="top:627px">Despues de funcionPunteros 20</div>
<div class="a" style="left:1328px;top:572px;width:13px;height:89px;background:#c4c5c3;border-left:1px solid #b5b6b4"></div>
<div class="a" style="left:1332px;top:575px;width:6px;height:42px;border-radius:3px;background:#7b7f7f"></div>
<svg style="left:4px;top:678px" width="12" height="10" viewBox="0 0 12 10"><rect x="4" y=".7" width="7.300" height="5.600" fill="#f6f6f6" stroke="#222" stroke-width="1.300"/><path d="M4 1h7.300" stroke="#222" stroke-width="2"/><rect x=".7" y="3.700" width="7.300" height="5.600" fill="#f6f6f6" stroke="#222" stroke-width="1.300"/><path d="M.7 4h7.300" stroke="#222" stroke-width="2"/></svg>
<div class="a" style="left:24px;top:672px;width:73px;height:22px;border:1px solid #bdbdba;border-radius:4px;background:#dcdcdb"></div>
<svg style="left:28px;top:675px" width="16" height="16" viewBox="0 0 16 16"><rect x=".5" y=".5" width="14" height="11.500" fill="#f4f7fb" stroke="#6f809a"/><rect x="1" y="1" width="13" height="2.500" fill="#8eabd2"/><path d="M1 4.500h13" stroke="#b9c8dc" stroke-width=".8"/><path d="M6.500 5.500l3 3" stroke="#b8741c" stroke-width="1.500"/><ellipse cx="10.300" cy="11" rx="5" ry="3.600" fill="#f2bc6a" stroke="#b8741c" stroke-width="1"/><path d="M8 10.500h4" stroke="#fff3d8" stroke-width="1"/></svg>
<div class="t" style="left:47.7px;top:675px;font-size:14.6px;transform:scaleX(1.0473);color:#151515;">Output</div>
<svg style="left:1048px;top:676px" width="17" height="16" viewBox="0 0 17 16"><path d="M3.500 .7h9a3 3 0 0 1 3 3v5a3 3 0 0 1-3 3h-1l1.500 3.300-4.500-3.300h-5a3 3 0 0 1-3-3v-5a3 3 0 0 1 3-3z" fill="#e7edf4" stroke="#7a8796" stroke-width="1"/><text x="5.600" y="9.800" font-size="9" font-weight="bold" font-family="Liberation Sans" fill="#111">1</text></svg>
<div class="sep" style="left:1068px;top:675px;height:18px;background:#cfcfcc"></div>
<div class="sep" style="left:1212px;top:675px;height:18px;background:#cfcfcc"></div>
<div class="sep" style="left:1244px;top:675px;height:18px;background:#cfcfcc"></div>
<div class="t" style="left:1097.5px;top:675.5px;font-size:14.6px;transform:scaleX(1.0088);">44:2/44:1206</div>
<div class="t" style="left:1215.3px;top:675.5px;font-size:14.6px;transform:scaleX(0.9984);">INS</div>
</div>
</body></html>
